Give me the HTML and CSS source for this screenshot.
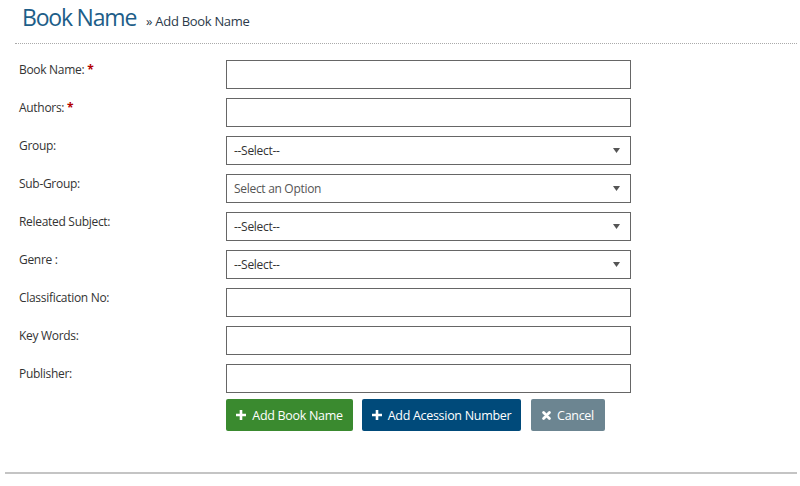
FILE: index.html
```html
<!DOCTYPE html>
<html>
<head>
<meta charset="utf-8">
<link rel="stylesheet" href="styles.css">
</head>
<body>
<div class="page">
  <div class="header">
    <h1 class="title">Book Name</h1>
    <span class="crumb">» Add Book Name</span>
  </div>
  <form class="form">
    <div class="row"><label class="lbl">Book Name: <span class="req">*</span></label><div class="input"></div></div>
    <div class="row"><label class="lbl">Authors: <span class="req">*</span></label><div class="input"></div></div>
    <div class="row"><label class="lbl">Group:</label><div class="input select"><span>--Select--</span><svg class="caret" width="7" height="5" viewBox="0 0 7 5"><path d="M0 0H7L3.5 5Z" fill="#555"/></svg></div></div>
    <div class="row"><label class="lbl">Sub-Group:</label><div class="input select"><span class="ph">Select an Option</span><svg class="caret" width="7" height="5" viewBox="0 0 7 5"><path d="M0 0H7L3.5 5Z" fill="#555"/></svg></div></div>
    <div class="row"><label class="lbl">Releated Subject:</label><div class="input select"><span>--Select--</span><svg class="caret" width="7" height="5" viewBox="0 0 7 5"><path d="M0 0H7L3.5 5Z" fill="#555"/></svg></div></div>
    <div class="row"><label class="lbl">Genre :</label><div class="input select"><span>--Select--</span><svg class="caret" width="7" height="5" viewBox="0 0 7 5"><path d="M0 0H7L3.5 5Z" fill="#555"/></svg></div></div>
    <div class="row"><label class="lbl">Classification No:</label><div class="input"></div></div>
    <div class="row"><label class="lbl">Key Words:</label><div class="input"></div></div>
    <div class="row"><label class="lbl">Publisher:</label><div class="input"></div></div>
    <div class="actions">
      <button type="button" class="btn green"><svg width="10" height="10" viewBox="0 0 10 10"><path d="M3.7 0H6.3V3.7H10V6.3H6.3V10H3.7V6.3H0V3.7H3.7Z" fill="#fff"/></svg>Add Book Name</button>
      <button type="button" class="btn navy"><svg width="10" height="10" viewBox="0 0 10 10"><path d="M3.7 0H6.3V3.7H10V6.3H6.3V10H3.7V6.3H0V3.7H3.7Z" fill="#fff"/></svg>Add Acession Number</button>
      <button type="button" class="btn gray"><svg width="9" height="9" viewBox="0 0 9 9"><path d="M1.6 1.6L7.4 7.4M7.4 1.6L1.6 7.4" stroke="#fff" stroke-width="2.8" stroke-linecap="round"/></svg>Cancel</button>
    </div>
  </form>
</div>
<div class="footer-line"></div>
</body>
</html>
```

FILE: styles.css
```css
html, body {
  margin: 0;
  padding: 0;
  background: #fff;
  font-family: "Open Sans", "Noto Sans", sans-serif;
  color: #333;
}
.page {
  margin: 0 3px 0 15px;
}
.header {
  display: flex;
  align-items: baseline;
  padding: 1px 0 0 7px;
  height: 44px;
  box-sizing: border-box;
  border-bottom: 1px dotted #aaa;
}
.title {
  margin: 0;
  font-size: 23px;
  font-weight: 400;
  color: #1d5e89;
  line-height: 32px;
  letter-spacing: -1.2px;
}
.crumb {
  margin-left: 10px;
  font-size: 13px;
  letter-spacing: -0.3px;
  color: #2b3a4a;
}
.form {
  padding: 16px 0 0 4px;
  display: flex;
  flex-direction: column;
  gap: 9px;
}
.row {
  display: flex;
  align-items: flex-start;
}
.lbl {
  width: 207px;
  font-size: 12px;
  line-height: 17px;
  padding-top: 1px;
  letter-spacing: -0.3px;
  color: #333;
}
.req {
  color: #b30000;
  font-weight: 700;
}
.input {
  width: 405px;
  height: 29px;
  box-sizing: border-box;
  border: 1px solid #666;
  background: #fff;
}
.select {
  display: flex;
  align-items: center;
  justify-content: space-between;
  padding: 0 10px 0 7px;
  font-size: 12px;
  letter-spacing: -0.3px;
  color: #333;
}
.select .ph {
  color: #555;
}
.caret {
  display: block;
}
.actions {
  display: flex;
  gap: 9px;
  margin-left: 207px;
  margin-top: -3px;
}
.btn {
  display: flex;
  align-items: center;
  justify-content: center;
  gap: 6px;
  height: 32px;
  padding: 0;
  border: none;
  border-radius: 2px;
  font-family: "Open Sans", "Noto Sans", sans-serif;
  font-size: 12.5px;
  letter-spacing: -0.3px;
  white-space: nowrap;
  color: #fff;
}
.green { background: #3a8a2f; width: 127px; }
.navy { background: #004a7a; width: 159px; margin-right: 1px; }
.gray { background: #6c8591; width: 74px; }
.footer-line {
  margin: 41px 3px 0 5px;
  height: 2px;
  background: #c4c4c4;
}
```
